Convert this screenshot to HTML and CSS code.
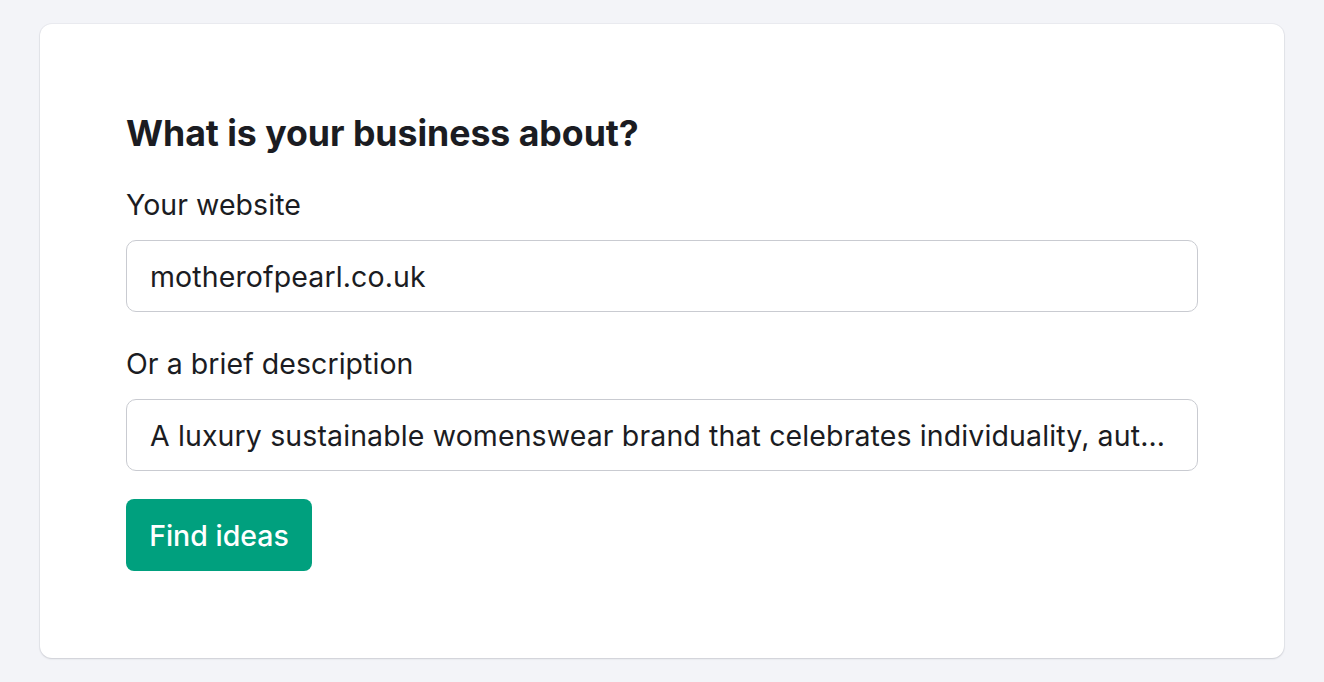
FILE: index.html
```html
<!DOCTYPE html>
<html>
<head>
<meta charset="utf-8">
<link rel="stylesheet" href="styles.css">
</head>
<body>
<div class="card">
  <h1 class="title">What is your business about?</h1>
  <label class="label label-first">Your website</label>
  <div class="field">motherofpearl.co.uk</div>
  <label class="label label-second">Or a brief description</label>
  <div class="field"><span class="ellipsis">A luxury sustainable womenswear brand that celebrates individuality, aut...</span></div>
  <button class="btn">Find ideas</button>
</div>
</body>
</html>
```
FILE: styles.css
```css
* { box-sizing: border-box; }
html, body { margin: 0; padding: 0; }
body {
  background: #f3f4f8;
  font-family: Inter, "Noto Sans", sans-serif;
  color: #1b1c22;
  padding: 24px 40px;
  height: 682px;
}
.card {
  background: #fff;
  border-radius: 12px;
  box-shadow: 0 1px 2px rgba(20, 25, 40, 0.14), 0 0 0 1px rgba(20, 25, 40, 0.04);
  padding: 86px 86px 87px;
  display: flex;
  flex-direction: column;
  align-items: flex-start;
}
.title {
  margin: 0;
  font-size: 35.7px;
  font-weight: 700;
  line-height: 46px;
  letter-spacing: -0.05px;
}
.label {
  display: block;
  font-size: 28.5px;
  line-height: 36px;
  margin-bottom: 17px;
  letter-spacing: 0.05px;
}
.label-first { margin-top: 31px; }
.label-second { margin-top: 34px; }
.field {
  width: 100%;
  height: 72px;
  border: 1px solid #c9cbd1;
  border-radius: 10px;
  padding: 0 23px;
  font-size: 28.5px;
  letter-spacing: 0.12px;
  display: flex;
  align-items: center;
  overflow: hidden;
}
.ellipsis {
  white-space: nowrap;
  overflow: hidden;
  text-overflow: ellipsis;
}
.btn {
  margin-top: 28px;
  height: 72px;
  width: 186px;
  border: none;
  border-radius: 8px;
  background: #00a07e;
  color: #fff;
  font-family: Inter, "Noto Sans", sans-serif;
  font-size: 28.5px;
  font-weight: 500;
  padding: 0;
}
```
